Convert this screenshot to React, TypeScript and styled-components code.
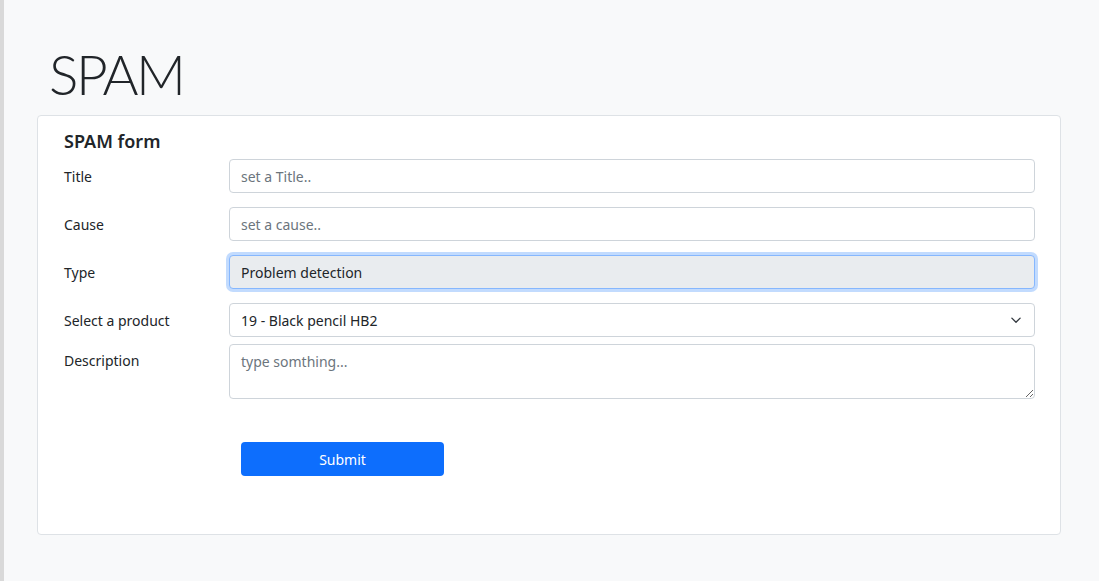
import React from "react";
import styled, { createGlobalStyle } from "styled-components";

const GlobalStyle = createGlobalStyle`
  html, body { margin: 0; padding: 0; }
  body {
    background: #f8f9fa;
    font-family: "Segoe UI", "Noto Sans", "Liberation Sans", sans-serif;
    color: #212529;
  }
  * { box-sizing: border-box; }
`;

const Page = styled.div`
  min-height: 581px;
  border-left: 4px solid #d9d9d9;
  padding: 41px 38px 40px 33px;
`;

const Heading = styled.h1`
  margin: 0 0 8px 12px;
  font-size: 55px;
  font-weight: 300;
  line-height: 66px;
  letter-spacing: -2.5px;
  color: #212529;
  font-family: "Lato", "Noto Sans", sans-serif;
`;

const Card = styled.div`
  background: #fff;
  border: 1px solid #dee2e6;
  border-radius: 4px;
  padding: 15px 25px 58px 26px;
`;

const CardTitle = styled.h5`
  margin: 0 0 7px;
  font-size: 18px;
  font-weight: 600;
  line-height: 21px;
`;

const Row = styled.div<{ $gap?: number; $top?: boolean }>`
  display: grid;
  grid-template-columns: 165px 1fr;
  align-items: ${(p) => (p.$top ? "start" : "center")};
  margin-bottom: ${(p) => p.$gap ?? 14}px;
`;

const Label = styled.label<{ $top?: boolean }>`
  font-size: 14px;
  line-height: 21px;
  padding-top: ${(p) => (p.$top ? "6px" : "0")};
`;

const Input = styled.input<{ $focused?: boolean }>`
  width: 100%;
  height: 34px;
  padding: 6px 11px;
  font: inherit;
  font-size: 14px;
  color: #212529;
  border: 1px solid ${(p) => (p.$focused ? "#86b7fe" : "#ced4da")};
  border-radius: 4px;
  background: ${(p) => (p.$focused ? "#e9ecef" : "#fff")};
  box-shadow: ${(p) => (p.$focused ? "0 0 0 3px rgba(13,110,253,.25)" : "none")};
  outline: none;
  &::placeholder { color: #6c757d; }
`;

const SelectWrap = styled.div`
  position: relative;
`;

const Select = styled.select`
  width: 100%;
  height: 34px;
  padding: 6px 36px 6px 11px;
  font: inherit;
  font-size: 14px;
  color: #212529;
  border: 1px solid #ced4da;
  border-radius: 4px;
  background: #fff;
  appearance: none;
  outline: none;
`;

const Chevron = styled.svg`
  position: absolute;
  right: 13px;
  top: 50%;
  transform: translateY(-50%);
  pointer-events: none;
`;

const TextArea = styled.textarea`
  width: 100%;
  height: 55px;
  padding: 6px 11px;
  font: inherit;
  font-size: 14px;
  line-height: 21px;
  color: #212529;
  border: 1px solid #ced4da;
  border-radius: 4px;
  display: block;
  resize: vertical;
  outline: none;
  &::placeholder { color: #6c757d; }
`;

const Actions = styled.div`
  padding-left: 177px;
  margin-top: 43px;
`;

const Button = styled.button`
  width: 203px;
  height: 34px;
  background: #0d6efd;
  color: #fff;
  border: none;
  border-radius: 4px;
  font: inherit;
  font-size: 14px;
  cursor: pointer;
`;

export default function App() {
  return (
    <>
      <GlobalStyle />
      <Page>
        <Heading>SPAM</Heading>
        <Card>
          <CardTitle>SPAM form</CardTitle>
          <Row>
            <Label>Title</Label>
            <Input placeholder="set a Title.." />
          </Row>
          <Row>
            <Label>Cause</Label>
            <Input placeholder="set a cause.." />
          </Row>
          <Row>
            <Label>Type</Label>
            <Input $focused readOnly value="Problem detection" />
          </Row>
          <Row $gap={7}>
            <Label>Select a product</Label>
            <SelectWrap>
              <Select defaultValue="19">
                <option value="19">19 - Black pencil HB2</option>
              </Select>
              <Chevron width="12" height="12" viewBox="0 0 16 16">
                <path d="M2.5 5.5l5.5 5.5 5.5-5.5" fill="none" stroke="#343a40" strokeWidth="1.8" strokeLinecap="round" strokeLinejoin="round" />
              </Chevron>
            </SelectWrap>
          </Row>
          <Row $gap={0} $top>
            <Label $top>Description</Label>
            <TextArea placeholder="type somthing..." />
          </Row>
          <Actions>
            <Button>Submit</Button>
          </Actions>
        </Card>
      </Page>
    </>
  );
}
